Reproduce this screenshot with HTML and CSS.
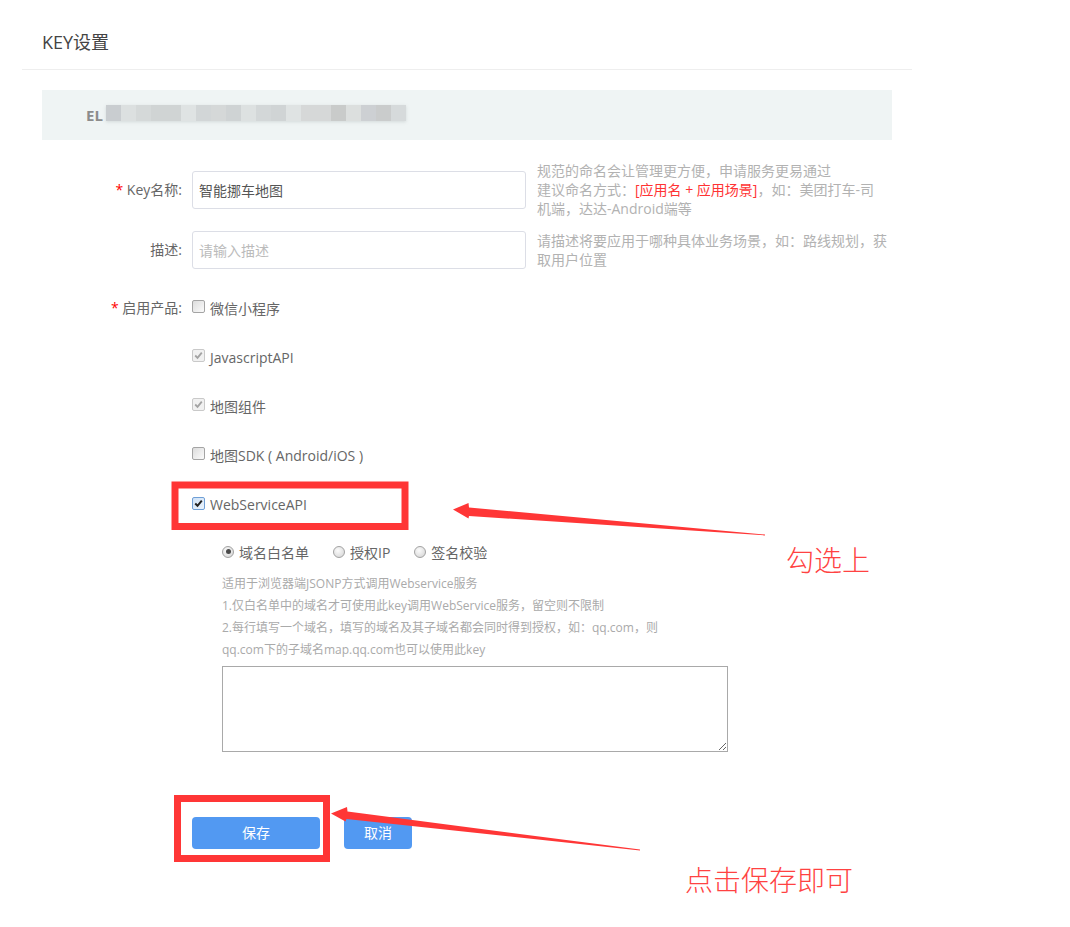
FILE: index.html
```html
<!DOCTYPE html>
<html lang="zh-CN">
<head>
<meta charset="utf-8">
<title>KEY设置</title>
<link rel="stylesheet" href="styles.css">
</head>
<body>
<div class="page">
  <div class="header">KEY设置</div>
  <div class="keybar"><span class="key-prefix">EL</span><span class="key-blur"></span></div>

  <div class="form">
    <div class="row">
      <label class="label"><span class="req">*</span> Key名称:</label>
      <input class="text-input" type="text" value="智能挪车地图">
      <div class="hint">规范的命名会让管理更方便，申请服务更易通过<br>建议命名方式：<span class="hint-red">[应用名 + 应用场景]</span>，如：美团打车-司<br>机端，达达-Android端等</div>
    </div>
    <div class="row">
      <label class="label">描述:</label>
      <input class="text-input" type="text" placeholder="请输入描述">
      <div class="hint">请描述将要应用于哪种具体业务场景，如：路线规划，获<br>取用户位置</div>
    </div>

    <div class="row-products">
      <label class="label"><span class="req">*</span> 启用产品:</label>
      <div class="options">
        <div class="option"><span class="cb"></span>微信小程序</div>
        <div class="option"><span class="cb cb-disabled"><svg viewBox="0 0 11 11" width="9" height="9"><path d="M1.5 5.5 L4.3 8.3 L9.5 2" fill="none" stroke="currentColor" stroke-width="2.2"/></svg></span>JavascriptAPI</div>
        <div class="option"><span class="cb cb-disabled"><svg viewBox="0 0 11 11" width="9" height="9"><path d="M1.5 5.5 L4.3 8.3 L9.5 2" fill="none" stroke="currentColor" stroke-width="2.2"/></svg></span>地图组件</div>
        <div class="option"><span class="cb"></span>地图SDK ( Android/iOS )</div>
        <div class="option option-last"><span class="cb cb-checked"><svg viewBox="0 0 11 11" width="9" height="9"><path d="M1.5 5.5 L4.3 8.3 L9.5 2" fill="none" stroke="currentColor" stroke-width="2.4"/></svg></span>WebServiceAPI</div>

        <div class="ws-sub">
          <div class="radios">
            <span class="radio-item"><span class="radio radio-on"></span>域名白名单</span>
            <span class="radio-item"><span class="radio"></span>授权IP</span>
            <span class="radio-item"><span class="radio"></span>签名校验</span>
          </div>
          <div class="ws-hint">适用于浏览器端JSONP方式调用Webservice服务<br>1.仅白名单中的域名才可使用此key调用WebService服务，留空则不限制<br>2.每行填写一个域名，填写的域名及其子域名都会同时得到授权，如：qq.com，则<br>qq.com下的子域名map.qq.com也可以使用此key</div>
          <textarea class="ws-textarea"></textarea>
        </div>
      </div>
    </div>

    <div class="actions">
      <button class="btn btn-save" type="button">保存</button>
      <button class="btn btn-cancel" type="button">取消</button>
    </div>
  </div>
</div>

<div class="annot">
  <svg class="annot-svg" width="1070" height="927" viewBox="0 0 1070 927">
    <rect x="175" y="485" width="230" height="41.5" fill="none" stroke="#ff3636" stroke-width="7"/>
    <rect x="177.5" y="798.5" width="149" height="60" fill="none" stroke="#ff3636" stroke-width="7"/>
    <polygon points="453,509.5 468.5,503 469,507.5 765,534.6 765,535.4 469,516 468.5,518.5" fill="#ff3636"/>
    <polygon points="331,813.5 347,807 347.5,811.5 640,849.6 640,850.4 346.5,819 345.5,821.5" fill="#ff3636"/>
  </svg>
  <div class="note note-check">勾选上</div>
  <div class="note note-save">点击保存即可</div>
</div>
</body>
</html>
```

FILE: styles.css
```css
html, body {
  margin: 0;
  padding: 0;
}
body {
  position: relative;
  width: 1070px;
  height: 927px;
  overflow: hidden;
  background: #fff;
  font-family: "Open Sans", "Noto Sans CJK SC", sans-serif;
  color: #666;
}

.page {
  margin-left: 22px;
  width: 890px;
}

.header {
  padding: 29px 0 14px 20px;
  font-size: 18px;
  line-height: 26px;
  color: #444;
  border-bottom: 1px solid #eee;
}

.keybar {
  margin: 20px 20px 0;
  height: 50px;
  background: #eff4f4;
  display: flex;
  align-items: center;
  padding-left: 44px;
}
.key-prefix {
  font-size: 15px;
  font-weight: 700;
  line-height: 20px;
  color: #8c8c8c;
}
.key-blur {
  width: 300px;
  height: 16px;
  margin-left: 3px;
  margin-top: -5px;
  box-shadow: 0 1px 3px rgba(200, 205, 205, 0.7);
  background: linear-gradient(to right,
    #c9cdd0 0, #c9cdd0 15px,
    #dce0e0 15px, #dce0e0 30px,
    #d5d9d9 30px, #d5d9d9 45px,
    #d0d4d4 45px, #d0d4d4 75px,
    #dfe3e3 75px, #dfe3e3 90px,
    #d2d6d7 90px, #d2d6d7 105px,
    #d5d8d8 105px, #d5d8d8 120px,
    #cfd3d4 120px, #cfd3d4 135px,
    #dde1e1 135px, #dde1e1 150px,
    #d3d7d8 150px, #d3d7d8 165px,
    #d0d4d5 165px, #d0d4d5 180px,
    #dfe3e3 180px, #dfe3e3 195px,
    #d6d8d8 195px, #d6d8d8 225px,
    #c9cbca 225px, #c9cbca 240px,
    #dcdfde 240px, #dcdfde 255px,
    #cdd0d3 255px, #cdd0d3 270px,
    #cacccc 270px, #cacccc 285px,
    #d6dadb 285px, #d6dadb 300px);
}

.form {
  margin-top: 21px;
}
.row {
  display: flex;
  align-items: center;
}
.row + .row {
  margin-top: 13px;
}
.label {
  flex: none;
  width: 170px;
  box-sizing: border-box;
  padding-right: 10px;
  text-align: right;
  font-size: 14px;
  line-height: 20px;
  color: #666;
}
.req {
  color: #f00;
}
.text-input {
  flex: none;
  width: 334px;
  height: 38px;
  box-sizing: border-box;
  margin: 0;
  padding: 0 6px;
  border: 1px solid #dcdee6;
  border-radius: 3px;
  font: 14px "Open Sans", "Noto Sans CJK SC", sans-serif;
  color: #555;
  outline: none;
}
.text-input::placeholder {
  color: #bbb;
}
.hint {
  margin-left: 11px;
  font-size: 14px;
  line-height: 19px;
  color: #b2b2b2;
  white-space: nowrap;
}
.hint-red {
  color: #f33;
}

.row-products {
  display: flex;
  align-items: flex-start;
  margin-top: 29px;
}
.options {
  display: flex;
  flex-direction: column;
}
.option {
  display: flex;
  align-items: center;
  height: 20px;
  font-size: 14px;
  color: #666;
  margin-bottom: 29px;
}
.option-last {
  margin-bottom: 0;
}

.cb {
  flex: none;
  width: 13px;
  height: 13px;
  box-sizing: border-box;
  margin: 0 5px 3px 0;
  border: 1px solid #a4a4a4;
  border-radius: 2px;
  background: linear-gradient(135deg, #dcdcdc, #fbfbfb);
  display: flex;
  align-items: center;
  justify-content: center;
}
.cb-disabled {
  border-color: #c9c9c9;
  background: #f1f1f1;
  color: #a3a3a3;
}
.cb-checked {
  border-color: #6f9fd6;
  background: linear-gradient(135deg, #cfe2f7, #eaf3fc);
  color: #222;
  margin-bottom: 1px;
}

.ws-sub {
  margin-left: 30px;
  margin-top: 28px;
}
.radios {
  display: flex;
  align-items: center;
  height: 20px;
  font-size: 14px;
  color: #666;
}
.radio-item {
  display: flex;
  align-items: center;
}
.radio-item + .radio-item {
  margin-left: 24px;
}
.radio {
  flex: none;
  width: 12px;
  height: 12px;
  box-sizing: border-box;
  margin: 0 5px 1px 0;
  border: 1px solid #a2a2a2;
  border-radius: 50%;
  background: radial-gradient(circle at 40% 35%, #fbfbfb, #d2d2d2);
  display: flex;
  align-items: center;
  justify-content: center;
}
.radio-on::after {
  content: "";
  width: 5px;
  height: 5px;
  border-radius: 50%;
  background: #4a4a4a;
}

.ws-hint {
  margin-top: 11px;
  font-size: 12px;
  line-height: 22px;
  color: #aaa;
  white-space: nowrap;
}
.ws-textarea {
  display: block;
  margin: 5px 0 0;
  width: 506px;
  height: 86px;
  box-sizing: border-box;
  border: 1px solid #a9a9a9;
  border-radius: 0;
  padding: 2px;
  resize: both;
  outline: none;
}

.actions {
  display: flex;
  margin-top: 65px;
  margin-left: 170px;
}
.btn {
  height: 32px;
  margin: 0;
  padding: 0;
  border: none;
  border-radius: 4px;
  background: #5299f2;
  color: #fff;
  font: 14px/32px "Open Sans", "Noto Sans CJK SC", sans-serif;
  text-align: center;
}
.btn-save {
  width: 128px;
}
.btn-cancel {
  width: 68px;
  margin-left: 24px;
}

.annot {
  position: absolute;
  left: 0;
  top: 0;
  width: 1070px;
  height: 927px;
  pointer-events: none;
}
.annot-svg {
  position: absolute;
  left: 0;
  top: 0;
}
.note {
  position: absolute;
  font-family: "Noto Sans CJK SC", sans-serif;
  font-size: 28px;
  line-height: 28px;
  font-weight: 300;
  color: #ff4242;
  white-space: nowrap;
}
.note-check {
  left: 786px;
  top: 545px;
}
.note-save {
  left: 685px;
  top: 865px;
}
```
